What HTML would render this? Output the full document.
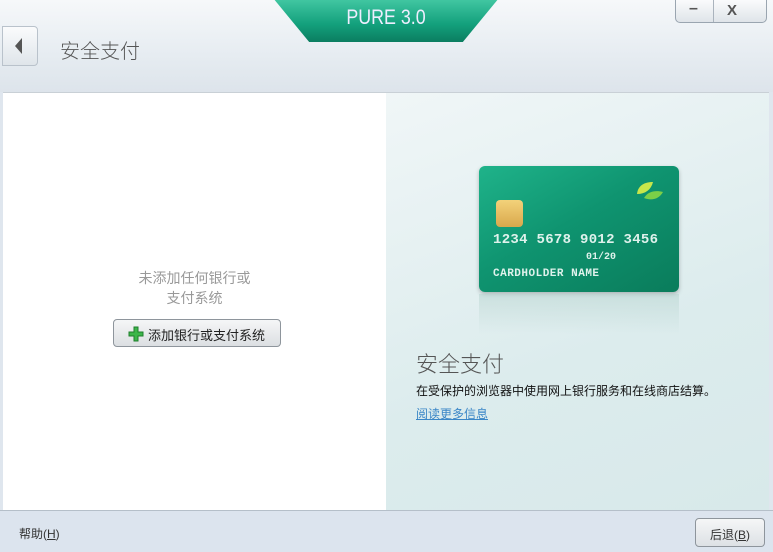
<!DOCTYPE html>
<html><head><meta charset="utf-8"><style>
*{margin:0;padding:0;box-sizing:border-box}
body{width:773px;height:552px;overflow:hidden;background:#dfe6ee;font-family:"Liberation Sans","Noto Sans CJK SC",sans-serif;position:relative}
.hdr{position:absolute;left:0;top:0;width:773px;height:92px;background:linear-gradient(#f6f8fa,#e6ecf1 60%,#dde4eb)}
.back{position:absolute;left:2px;top:26px;width:36px;height:40px;border:1px solid #b9c2cb;border-radius:0 4px 4px 0;background:linear-gradient(#fafbfc,#dfe5ea)}
.back:after{content:"";position:absolute;left:12px;top:11px;border-right:7px solid #555;border-top:8px solid transparent;border-bottom:8px solid transparent}
.title{position:absolute;left:60px;top:35px;font-size:20px;color:#555;font-weight:300}
.badge{position:absolute;left:273px;top:-2px;width:226px;height:44px;background:linear-gradient(#44c9a4,#13a07c 60%,#0b7d60);clip-path:polygon(0 0,100% 0,84% 100%,16% 100%);border-radius:0 0 6px 6px}
.badge span{position:absolute;left:0;right:0;top:8px;text-align:center;color:#eef;font-size:21px;transform:scaleX(.85)}
.wbtn{position:absolute;left:675px;top:-1px;width:92px;height:24px;border:1px solid #9aa5b0;border-radius:0 0 5px 5px;background:linear-gradient(#fafbfc,#dfe4e9)}
.wbtn i{position:absolute;left:37px;top:0;width:1px;height:22px;background:#aab3bd}
.wbtn b{position:absolute;color:#555}
.left{position:absolute;left:3px;top:92px;width:383px;height:418px;background:#fff;border-top:1px solid #c9d0d6}
.right{position:absolute;left:386px;top:92px;width:383px;height:418px;background:linear-gradient(160deg,#f0f6f7,#dceced 60%,#d8e9ea);border-top:1px solid #c9d0d6}
.empty{position:absolute;left:0;width:383px;top:175px;text-align:center;color:#999;font-size:14px;line-height:20px}
.addbtn{position:absolute;left:110px;top:226px;width:168px;height:28px;border:1px solid #8e959c;border-radius:4px;background:linear-gradient(#f5f6f7,#dcdfe2);font-size:13px;color:#222;padding:5px 0 0 34px}
.addbtn svg{position:absolute;left:14px;top:6px}
.card{position:absolute;left:93px;top:73px;width:200px;height:126px;border-radius:6px;background:linear-gradient(150deg,#1fb38a,#0f9470 45%,#0a7c5b);box-shadow:0 2px 4px rgba(0,0,0,.25)}
.chip{position:absolute;left:17px;top:34px;width:27px;height:27px;border-radius:4px;background:linear-gradient(#f3d27a,#d9a84c)}
.num{position:absolute;left:14px;top:66px;font-family:"Liberation Mono",monospace;font-weight:bold;color:#dff2ec;font-size:14px;letter-spacing:0.3px}
.exp{position:absolute;left:107px;top:86px;font-family:"Liberation Mono",monospace;color:#dff2ec;font-size:10px;font-weight:bold}
.nm{position:absolute;left:14px;top:102px;font-family:"Liberation Mono",monospace;color:#dff2ec;font-size:11px;font-weight:bold;letter-spacing:.5px}
.refl{position:absolute;left:93px;top:201px;width:200px;height:40px;background:linear-gradient(rgba(180,210,205,.5),rgba(220,236,237,0))}
.rt{position:absolute;left:30px;top:254px;font-size:22px;color:#555;font-weight:300}
.rd{position:absolute;left:30px;top:289px;font-size:12px;color:#111}
.rl{position:absolute;left:30px;top:312px;font-size:12px;color:#3a86c7;text-decoration:underline}
.ftr{position:absolute;left:0;top:510px;width:773px;height:42px;background:#dce4ee;border-top:1px solid #b5bfc9}
.help{position:absolute;left:19px;top:14px;font-size:12px;color:#333}
.bk{position:absolute;left:695px;top:7px;width:70px;height:29px;border:1px solid #8e959c;border-radius:4px;background:linear-gradient(#f5f6f7,#dde1e5);font-size:12px;color:#333;text-align:center;padding-top:7px}
</style></head><body>
<div class="hdr">
<div class="back"></div>
<div class="title">安全支付</div>
<div class="badge"><span>PURE 3.0</span></div>
<div class="wbtn"><b style="left:13px;top:0px;font-size:16px;font-weight:bold">–</b><i></i><b style="left:51px;top:2px;font-size:15px">X</b></div>
</div>
<div class="left">
<div class="empty">未添加任何银行或<br>支付系统</div>
<div class="addbtn"><svg width="16" height="16"><path d="M6 1h4v5h5v4h-5v5H6v-5H1V6h5z" fill="#3cb64a" stroke="#1f7f2c"/></svg>添加银行或支付系统</div>
</div>
<div class="right">
<div class="card">
<div class="chip"></div>
<svg style="position:absolute;left:156px;top:14px" width="30" height="24"><path d="M2 14C3 5 10 2 18 2 16 10 10 14 2 14z" fill="#c8e64a"/><path d="M9 18C13 11 21 10 28 12 24 19 17 21 9 18z" fill="#7ccf48"/></svg>
<div class="num">1234 5678 9012 3456</div>
<div class="exp">01/20</div>
<div class="nm">CARDHOLDER NAME</div>
</div>
<div class="refl"></div>
<div class="rt">安全支付</div>
<div class="rd">在受保护的浏览器中使用网上银行服务和在线商店结算。</div>
<div class="rl">阅读更多信息</div>
</div>
<div class="ftr">
<div class="help">帮助(<u>H</u>)</div>
<div class="bk">后退(<u>B</u>)</div>
</div>
</body></html>
